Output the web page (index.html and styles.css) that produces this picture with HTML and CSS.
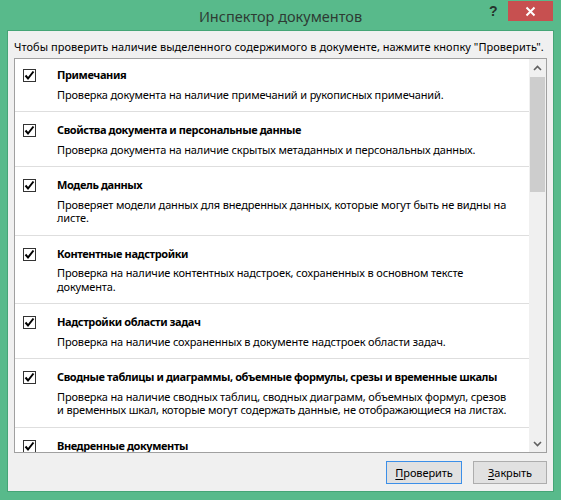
FILE: index.html
```html
<!DOCTYPE html>
<html lang="ru">
<head>
<meta charset="utf-8">
<title>Инспектор документов</title>
<link rel="stylesheet" href="styles.css">
</head>
<body>
<div class="window">
  <div class="titlebar">
    <div class="title">Инспектор документов</div>
    <div class="help">?</div>
    <div class="close">
      <svg width="11" height="11" viewBox="0 0 11 11"><path d="M1.5 1.5 L9.5 9.5 M9.5 1.5 L1.5 9.5" stroke="#fff" stroke-width="2" fill="none"/></svg>
    </div>
  </div>
  <div class="panel">
    <div class="prompt">Чтобы проверить наличие выделенного содержимого в документе, нажмите кнопку "Проверить".</div>
    <div class="list">
      <div class="items">
        <div class="item first">
          <span class="check"><svg width="11" height="11" viewBox="0 0 11 11"><path d="M1.5 5.5 L4 8.5 L9.5 1.5" stroke="#000" stroke-width="2" fill="none"/></svg></span>
          <div class="text">
            <div class="name">Примечания</div>
            <div class="desc">Проверка документа на наличие примечаний и рукописных примечаний.</div>
          </div>
        </div>
        <div class="item">
          <span class="check"><svg width="11" height="11" viewBox="0 0 11 11"><path d="M1.5 5.5 L4 8.5 L9.5 1.5" stroke="#000" stroke-width="2" fill="none"/></svg></span>
          <div class="text">
            <div class="name">Свойства документа и персональные данные</div>
            <div class="desc">Проверка документа на наличие скрытых метаданных и персональных данных.</div>
          </div>
        </div>
        <div class="item">
          <span class="check"><svg width="11" height="11" viewBox="0 0 11 11"><path d="M1.5 5.5 L4 8.5 L9.5 1.5" stroke="#000" stroke-width="2" fill="none"/></svg></span>
          <div class="text">
            <div class="name">Модель данных</div>
            <div class="desc">Проверяет модели данных для внедренных данных, которые могут быть не видны на<br>листе.</div>
          </div>
        </div>
        <div class="item">
          <span class="check"><svg width="11" height="11" viewBox="0 0 11 11"><path d="M1.5 5.5 L4 8.5 L9.5 1.5" stroke="#000" stroke-width="2" fill="none"/></svg></span>
          <div class="text">
            <div class="name">Контентные надстройки</div>
            <div class="desc">Проверка на наличие контентных надстроек, сохраненных в основном тексте<br>документа.</div>
          </div>
        </div>
        <div class="item">
          <span class="check"><svg width="11" height="11" viewBox="0 0 11 11"><path d="M1.5 5.5 L4 8.5 L9.5 1.5" stroke="#000" stroke-width="2" fill="none"/></svg></span>
          <div class="text">
            <div class="name">Надстройки области задач</div>
            <div class="desc">Проверка на наличие сохраненных в документе надстроек области задач.</div>
          </div>
        </div>
        <div class="item">
          <span class="check"><svg width="11" height="11" viewBox="0 0 11 11"><path d="M1.5 5.5 L4 8.5 L9.5 1.5" stroke="#000" stroke-width="2" fill="none"/></svg></span>
          <div class="text">
            <div class="name">Сводные таблицы и диаграммы, объемные формулы, срезы и временные шкалы</div>
            <div class="desc">Проверка на наличие сводных таблиц, сводных диаграмм, объемных формул, срезов<br>и временных шкал, которые могут содержать данные, не отображающиеся на листах.</div>
          </div>
        </div>
        <div class="item">
          <span class="check"><svg width="11" height="11" viewBox="0 0 11 11"><path d="M1.5 5.5 L4 8.5 L9.5 1.5" stroke="#000" stroke-width="2" fill="none"/></svg></span>
          <div class="text">
            <div class="name">Внедренные документы</div>
          </div>
        </div>
      </div>
      <div class="scrollbar">
        <div class="arrow"><svg width="9" height="6" viewBox="0 0 9 6"><path d="M1 5 L4.5 1.5 L8 5" stroke="#606060" stroke-width="1.6" fill="none"/></svg></div>
        <div class="track"><div class="thumb"></div></div>
        <div class="arrow"><svg width="9" height="6" viewBox="0 0 9 6"><path d="M1 1 L4.5 4.5 L8 1" stroke="#606060" stroke-width="1.6" fill="none"/></svg></div>
      </div>
    </div>
    <div class="buttons">
      <button class="btn default check-btn">Проверить</button>
      <button class="btn close-btn">Закрыть</button>
    </div>
  </div>
</div>
</body>
</html>
```
FILE: styles.css
```css
html, body {
  margin: 0;
  padding: 0;
}
body {
  font-family: "Noto Sans", "Open Sans", sans-serif;
  font-size: 11px;
  letter-spacing: -0.1px;
  color: #000;
}
.window {
  width: 561px;
  height: 500px;
  background: #58ba8b;
  display: flex;
  flex-direction: column;
  box-sizing: border-box;
}
.titlebar {
  height: 30px;
  display: flex;
  align-items: flex-start;
  position: relative;
}
.title {
  flex: 1;
  text-align: center;
  font-size: 14.5px;
  letter-spacing: 0;
  line-height: 20px;
  padding-top: 6px;
  color: #2e3b34;
}
.help {
  position: absolute;
  left: 489px;
  top: 3px;
  font-family: "Liberation Sans", sans-serif;
  font-weight: bold;
  font-size: 14px;
  color: #26332c;
}
.close {
  position: absolute;
  left: 508px;
  top: 1px;
  width: 45px;
  height: 20px;
  background: #c75050;
  display: flex;
  align-items: center;
  justify-content: center;
}
.panel {
  flex: 1;
  margin: 0 7px 8px 7px;
  border: 1px solid #45a576;
  background: #f0f0f0;
  padding: 8px 6px 6px 6px;
  display: flex;
  flex-direction: column;
  min-height: 0;
}
.prompt {
  line-height: 15px;
  letter-spacing: 0.05px;
  white-space: nowrap;
  margin-bottom: 4px;
}
.list {
  height: 393px;
  border: 1px solid #a0a0a0;
  background: #fff;
  display: flex;
}
.items {
  flex: 1;
  overflow: hidden;
}
.item {
  display: flex;
  align-items: flex-start;
  padding: 10px 0 10px 8px;
  border-bottom: 1px solid #dedede;
}
.item.first {
  padding-top: 8px;
}
.check {
  width: 11px;
  height: 11px;
  border: 1px solid #333;
  background: #fff;
  margin-top: 2px;
  margin-right: 21px;
  flex: none;
  display: flex;
}
.name {
  font-weight: bold;
  letter-spacing: -0.4px;
  line-height: 16px;
  white-space: nowrap;
}
.desc {
  margin-top: 4.5px;
  line-height: 13.5px;
  letter-spacing: -0.15px;
  white-space: nowrap;
}
.scrollbar {
  width: 17px;
  background: #f0f0f0;
  display: flex;
  flex-direction: column;
}
.arrow {
  height: 17px;
  display: flex;
  align-items: center;
  justify-content: center;
}
.track {
  flex: 1;
  padding-top: 1px;
}
.thumb {
  margin: 0 1px;
  height: 115px;
  background: #cdcdcd;
}
.buttons {
  display: flex;
  justify-content: flex-end;
  gap: 11px;
  margin-top: 8px;
}
.btn {
  height: 23px;
  font-family: "Noto Sans", "Open Sans", sans-serif;
  font-size: 11px;
  letter-spacing: -0.1px;
  color: #000;
  background: #e1e1e1;
  border: 1px solid #adadad;
  padding: 0;
  margin: 0;
}
.btn::first-letter {
  text-decoration: underline;
  text-underline-offset: 2px;
}
.check-btn {
  width: 76px;
}
.close-btn {
  width: 74px;
}
.btn.default {
  border-color: #3c8fe8;
}
```
